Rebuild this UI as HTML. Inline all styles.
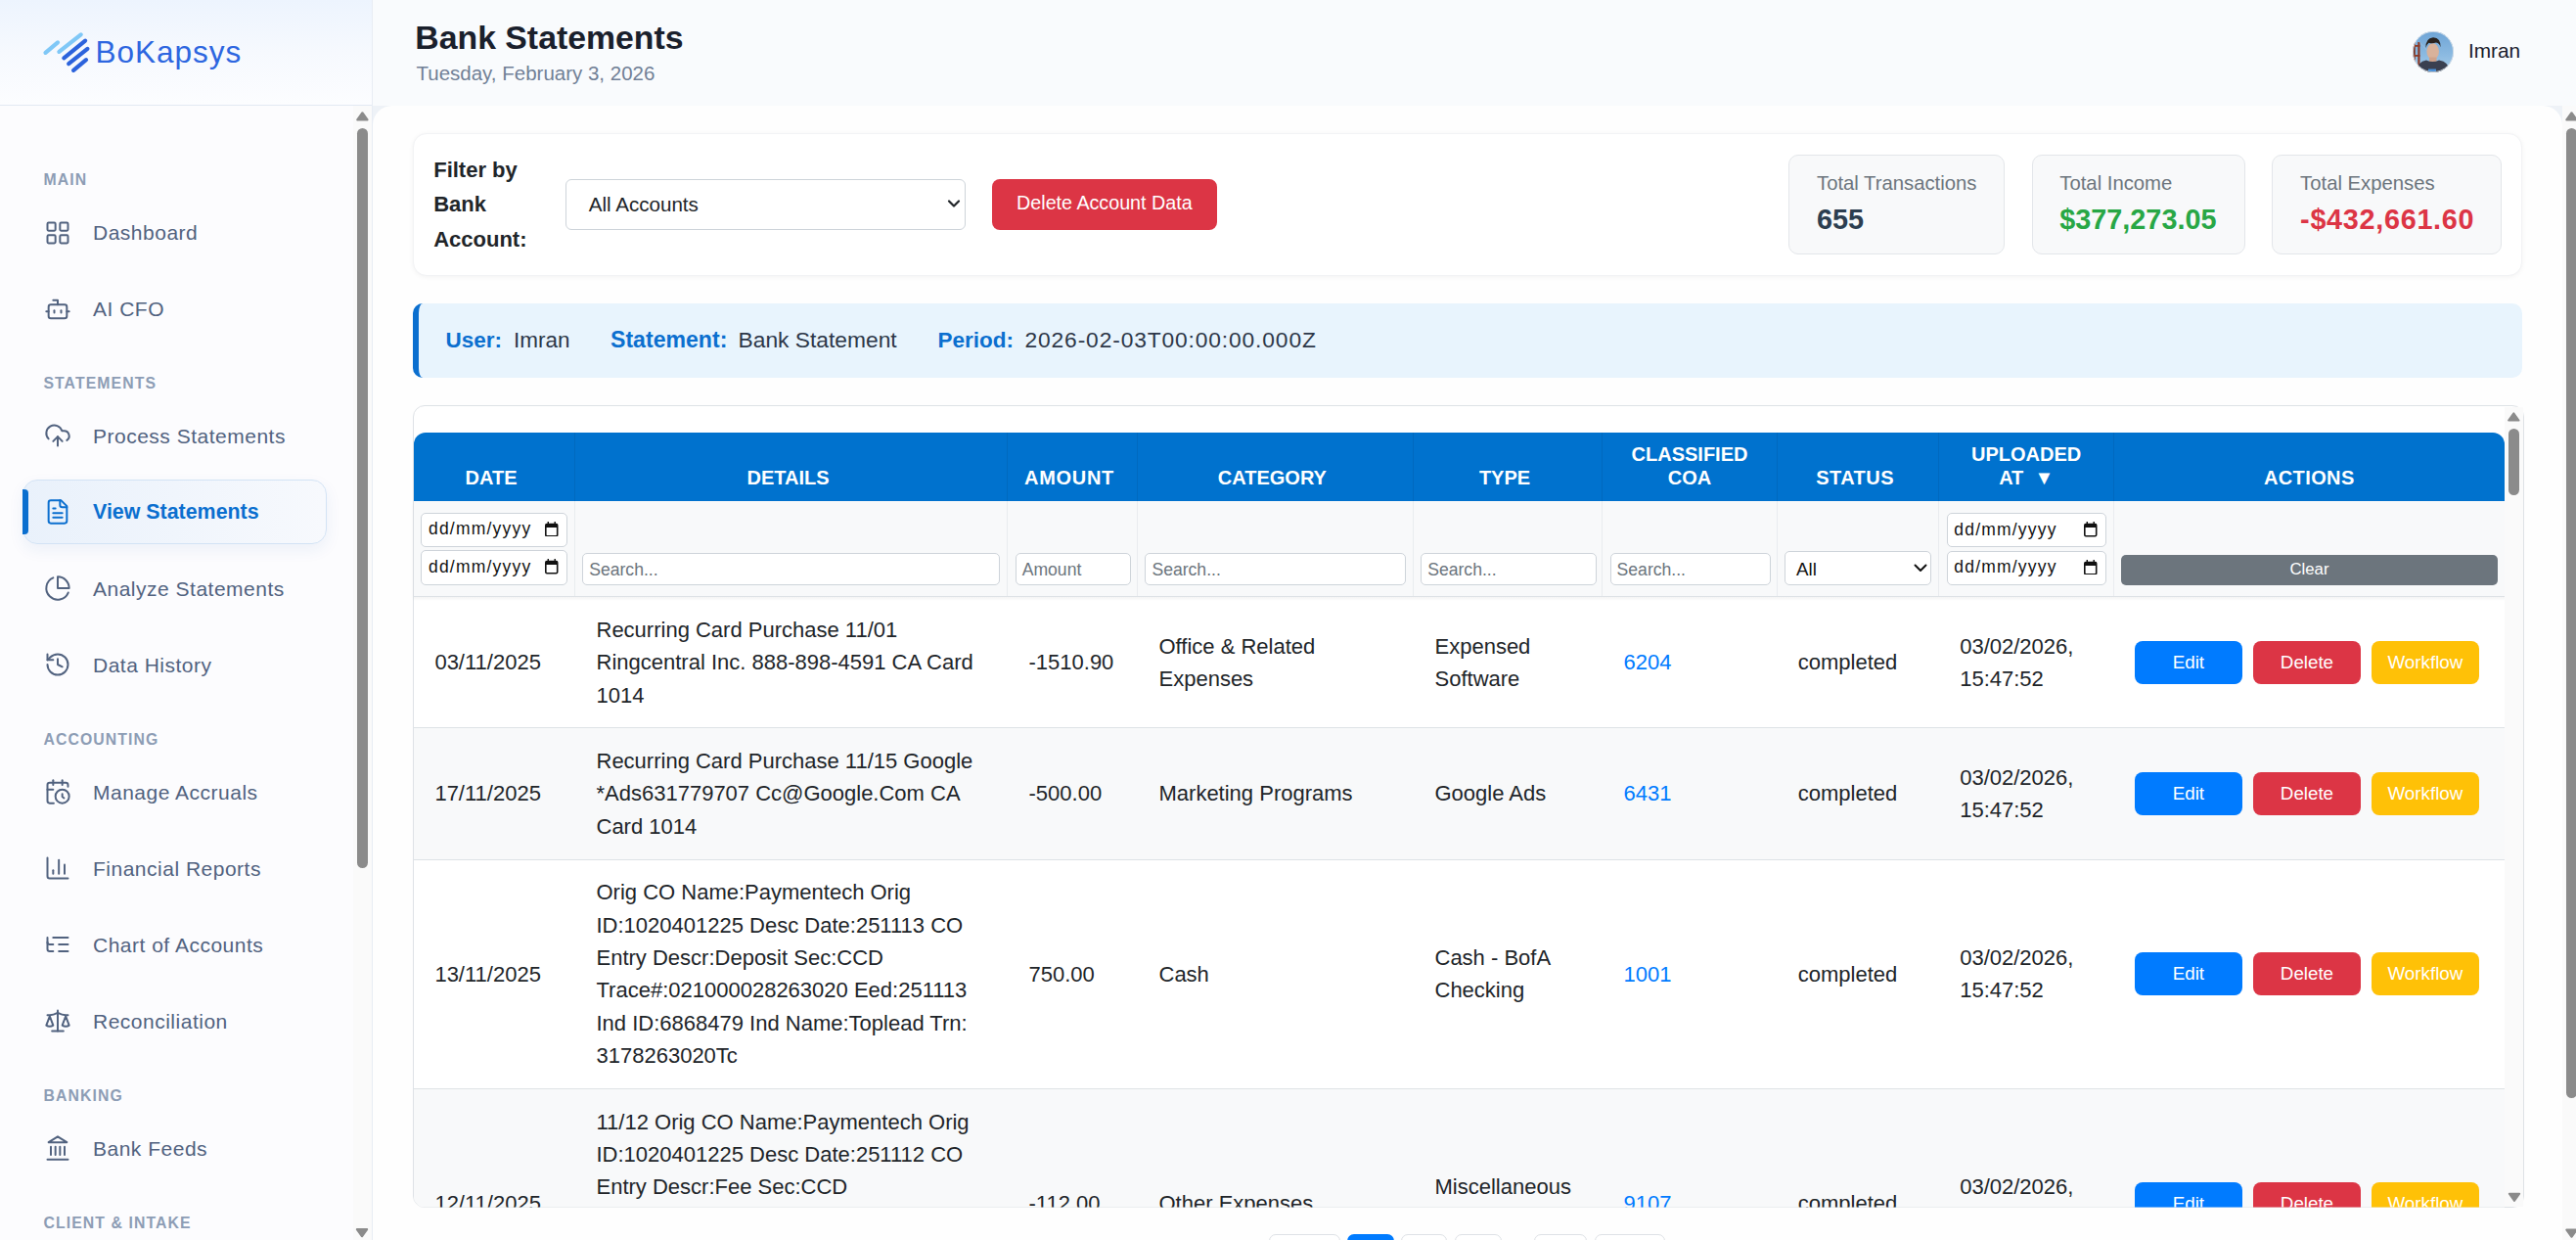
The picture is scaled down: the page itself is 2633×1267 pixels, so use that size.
<!DOCTYPE html><html><head><meta charset="utf-8"><style>
*{box-sizing:border-box;margin:0;padding:0}
html,body{width:2633px;height:1267px;overflow:hidden;font-family:"Liberation Sans",sans-serif;background:#eef2f7}
.t{position:absolute;white-space:nowrap}
.b{position:absolute}
svg.ic{position:absolute;width:28px;height:28px;fill:none;stroke-width:1.7;stroke-linecap:round;stroke-linejoin:round}
.tu{position:absolute;width:0;height:0;border-left:6px solid transparent;border-right:6px solid transparent;border-bottom:9.5px solid #8b8b8b}
.td{position:absolute;width:0;height:0;border-left:6px solid transparent;border-right:6px solid transparent;border-top:9.5px solid #8b8b8b}
.btn{position:absolute;color:#fff;text-align:center;border-radius:8px;font-size:18.75px}
.inp{position:absolute;background:#fff;border:1px solid #ced4da;border-radius:5px}
</style></head><body><div class="b" style="left:381.0px;top:108.0px;width:2238.0px;height:1159.0px;background:#fefefe;border-radius:20px 20px 0 0"></div>
<div class="b" style="left:381.0px;top:0.0px;width:2252.0px;height:108.0px;background:#f9fbfd"></div>
<div class="b" style="left:0.0px;top:0.0px;width:380.0px;height:1267.0px;background:#fcfcfe"></div>
<div class="b" style="left:380.0px;top:0.0px;width:1.0px;height:1267.0px;background:#e8edf4"></div>
<div class="b" style="left:0.0px;top:0.0px;width:380.0px;height:108.0px;background:linear-gradient(180deg,#edf4fe 0%,#f6f9fe 50%,#fcfdff 100%);border-bottom:1px solid #e2e9f3"></div>
<svg style="position:absolute;left:40px;top:30px" width="56" height="48" viewBox="40 30 56 48">
<g stroke-linecap="round" stroke-width="4.2" fill="none">
<line x1="46.5" y1="53.9" x2="59" y2="43.4" stroke="#80c8f7"/>
<line x1="60.4" y1="52.9" x2="82.7" y2="35.4" stroke="#80c8f7"/>
<line x1="65.3" y1="59.3" x2="87.1" y2="41.6" stroke="#2c63dc"/>
<line x1="70.2" y1="65.1" x2="89.4" y2="49.9" stroke="#2c63dc"/>
<line x1="75.1" y1="71.8" x2="88" y2="61.1" stroke="#2c63dc"/>
</g></svg>
<div class="t" style="left:97.5px;top:37.9px;font-size:31.5px;line-height:31.5px;color:#2d66e0;font-weight:400;letter-spacing:1.0px;">BoKapsys</div>
<div class="b" style="left:23.2px;top:490.2px;width:310.8px;height:66.3px;background:linear-gradient(90deg,#e9f1fb 0%,#f0f5fc 50%,#f7f9fd 100%);border:1px solid #d3e3f5;border-radius:15px;box-shadow:0 6px 16px rgba(30,90,170,0.07)"></div>
<div class="b" style="left:23.2px;top:500.1px;width:6.0px;height:45.8px;background:#0b6fcf;border-radius:0 4px 4px 0"></div>
<div class="t" style="left:44.4px;top:176.4px;font-size:15.8px;line-height:15.8px;color:#8d9db5;font-weight:700;letter-spacing:1.1px;">MAIN</div>
<div class="t" style="left:95.0px;top:227.0px;font-size:21px;line-height:21px;color:#51627f;font-weight:400;letter-spacing:0.5px;">Dashboard</div>
<svg class="ic" viewBox="0 0 24 24" style="left:44.6px;top:223.5px;stroke:#51627f"><rect x="3" y="3" width="7" height="7" rx="1"/><rect x="14" y="3" width="7" height="7" rx="1"/><rect x="14" y="14" width="7" height="7" rx="1"/><rect x="3" y="14" width="7" height="7" rx="1"/></svg>
<div class="t" style="left:95.0px;top:305.0px;font-size:21px;line-height:21px;color:#51627f;font-weight:400;letter-spacing:0.5px;">AI CFO</div>
<svg class="ic" viewBox="0 0 24 24" style="left:44.6px;top:301.5px;stroke:#51627f"><path d="M12 8V4H8"/><rect width="16" height="12" x="4" y="8" rx="2"/><path d="M2 14h2"/><path d="M20 14h2"/><path d="M15 13v2"/><path d="M9 13v2"/></svg>
<div class="t" style="left:44.4px;top:384.3px;font-size:15.8px;line-height:15.8px;color:#8d9db5;font-weight:700;letter-spacing:1.1px;">STATEMENTS</div>
<div class="t" style="left:95.0px;top:434.9px;font-size:21px;line-height:21px;color:#51627f;font-weight:400;letter-spacing:0.5px;">Process Statements</div>
<svg class="ic" viewBox="0 0 24 24" style="left:44.6px;top:431.4px;stroke:#51627f"><path d="M12 13v8"/><path d="M4 14.899A7 7 0 1 1 15.71 8h1.79a4.5 4.5 0 0 1 2.5 8.242"/><path d="m8 17 4-4 4 4"/></svg>
<div class="t" style="left:95.0px;top:512.6px;font-size:21.4px;line-height:21.4px;color:#0b6fcf;font-weight:700;letter-spacing:0px;">View Statements</div>
<svg class="ic" viewBox="0 0 24 24" style="left:44.6px;top:509.4px;stroke:#0b6fcf"><path d="M15 2H6a2 2 0 0 0-2 2v16a2 2 0 0 0 2 2h12a2 2 0 0 0 2-2V7Z"/><path d="M14 2v4a2 2 0 0 0 2 2h4"/><path d="M10 9H8"/><path d="M16 13H8"/><path d="M16 17H8"/></svg>
<div class="t" style="left:95.0px;top:590.9px;font-size:21px;line-height:21px;color:#51627f;font-weight:400;letter-spacing:0.5px;">Analyze Statements</div>
<svg class="ic" viewBox="0 0 24 24" style="left:44.6px;top:587.4px;stroke:#51627f"><path d="M21.21 15.89A10 10 0 1 1 8 2.83"/><path d="M22 12A10 10 0 0 0 12 2v10z"/></svg>
<div class="t" style="left:95.0px;top:668.9px;font-size:21px;line-height:21px;color:#51627f;font-weight:400;letter-spacing:0.5px;">Data History</div>
<svg class="ic" viewBox="0 0 24 24" style="left:44.6px;top:665.4px;stroke:#51627f"><path d="M3 12a9 9 0 1 0 9-9 9.75 9.75 0 0 0-6.74 2.74L3 8"/><path d="M3 3v5h5"/><path d="M12 7v5l4 2"/></svg>
<div class="t" style="left:44.4px;top:748.2px;font-size:15.8px;line-height:15.8px;color:#8d9db5;font-weight:700;letter-spacing:1.1px;">ACCOUNTING</div>
<div class="t" style="left:95.0px;top:798.8px;font-size:21px;line-height:21px;color:#51627f;font-weight:400;letter-spacing:0.5px;">Manage Accruals</div>
<svg class="ic" viewBox="0 0 24 24" style="left:44.6px;top:795.3px;stroke:#51627f"><path d="M21 7.5V6a2 2 0 0 0-2-2H5a2 2 0 0 0-2 2v14a2 2 0 0 0 2 2h3.5"/><path d="M16 2v4"/><path d="M8 2v4"/><path d="M3 10h5"/><path d="M17.5 17.5 16 16.3V14"/><circle cx="16" cy="16" r="6"/></svg>
<div class="t" style="left:95.0px;top:876.8px;font-size:21px;line-height:21px;color:#51627f;font-weight:400;letter-spacing:0.5px;">Financial Reports</div>
<svg class="ic" viewBox="0 0 24 24" style="left:44.6px;top:873.3px;stroke:#51627f"><path d="M3 3v16a2 2 0 0 0 2 2h16"/><path d="M18 17V9"/><path d="M13 17V5"/><path d="M8 17v-3"/></svg>
<div class="t" style="left:95.0px;top:954.8px;font-size:21px;line-height:21px;color:#51627f;font-weight:400;letter-spacing:0.5px;">Chart of Accounts</div>
<svg class="ic" viewBox="0 0 24 24" style="left:44.6px;top:951.3px;stroke:#51627f"><path d="M21 12h-8"/><path d="M21 6H8"/><path d="M21 18h-8"/><path d="M3 6v4c0 1.1.9 2 2 2h3"/><path d="M3 10v6c0 1.1.9 2 2 2h3"/></svg>
<div class="t" style="left:95.0px;top:1032.8px;font-size:21px;line-height:21px;color:#51627f;font-weight:400;letter-spacing:0.5px;">Reconciliation</div>
<svg class="ic" viewBox="0 0 24 24" style="left:44.6px;top:1029.3px;stroke:#51627f"><path d="m16 16 3-8 3 8c-.87.65-1.92 1-3 1s-2.13-.35-3-1Z"/><path d="m2 16 3-8 3 8c-.87.65-1.92 1-3 1s-2.13-.35-3-1Z"/><path d="M7 21h10"/><path d="M12 3v18"/><path d="M3 7h2c2 0 5-1 7-2 2 1 5 2 7 2h2"/></svg>
<div class="t" style="left:44.4px;top:1112.1px;font-size:15.8px;line-height:15.8px;color:#8d9db5;font-weight:700;letter-spacing:1.1px;">BANKING</div>
<div class="t" style="left:95.0px;top:1162.7px;font-size:21px;line-height:21px;color:#51627f;font-weight:400;letter-spacing:0.5px;">Bank Feeds</div>
<svg class="ic" viewBox="0 0 24 24" style="left:44.6px;top:1159.2px;stroke:#51627f"><line x1="3" x2="21" y1="22" y2="22"/><line x1="6" x2="6" y1="18" y2="11"/><line x1="10" x2="10" y1="18" y2="11"/><line x1="14" x2="14" y1="18" y2="11"/><line x1="18" x2="18" y1="18" y2="11"/><polygon points="12 2 20 7 4 7"/></svg>
<div class="t" style="left:44.4px;top:1242.0px;font-size:15.8px;line-height:15.8px;color:#8d9db5;font-weight:700;letter-spacing:1.1px;">CLIENT &amp; INTAKE</div>
<div class="b" style="left:361.0px;top:108.0px;width:19.0px;height:1159.0px;background:#fafafa"></div>
<svg style="position:absolute;left:0;top:0;overflow:visible" width="1" height="1"><polygon points="370.4,115.2 375.59999999999997,122.4 365.2,122.4" fill="#8b8b8b" stroke="#8b8b8b" stroke-width="2" stroke-linejoin="round"/></svg>
<div class="b" style="left:365.0px;top:130.8px;width:11.0px;height:755.9px;background:#8b8b8b;border-radius:6px"></div>
<svg style="position:absolute;left:0;top:0;overflow:visible" width="1" height="1"><polygon points="364.8,1256.1 375.2,1256.1 370,1263.3" fill="#8b8b8b" stroke="#8b8b8b" stroke-width="2" stroke-linejoin="round"/></svg>
<div class="t" style="left:424.3px;top:21.9px;font-size:33.8px;line-height:33.8px;color:#1a202c;font-weight:700;letter-spacing:0px;">Bank Statements</div>
<div class="t" style="left:425.5px;top:64.6px;font-size:20.5px;line-height:20.5px;color:#718096;font-weight:400;letter-spacing:0px;">Tuesday, February 3, 2026</div>
<svg style="position:absolute;left:2466px;top:32px" width="42" height="42" viewBox="0 0 42 42">
<defs><clipPath id="cav"><circle cx="21" cy="21" r="21"/></clipPath>
<linearGradient id="sky" x1="0" y1="0" x2="0" y2="1"><stop offset="0" stop-color="#6ea4d6"/><stop offset="0.6" stop-color="#8dbbe2"/><stop offset="1" stop-color="#a9cde8"/></linearGradient></defs>
<g clip-path="url(#cav)">
<rect width="42" height="42" fill="url(#sky)"/>
<rect x="0.5" y="10" width="2.2" height="32" fill="#7a3322"/>
<rect x="5.3" y="11" width="2.2" height="31" fill="#8c3b28"/>
<rect x="0.5" y="14" width="7" height="1.8" fill="#8c3b28"/>
<rect x="0.5" y="24" width="7" height="1.8" fill="#8c3b28"/>
<path d="M7 11 L30 36" stroke="#b9cfe0" stroke-width="0.4"/>
<ellipse cx="20.7" cy="20.5" rx="6.3" ry="8.3" fill="#d9b29b"/>
<path d="M13.5 17 Q13 7 21 6.2 Q29 6.5 28.6 16.5 Q27.5 12 24 11.6 Q20 13 16.5 11.8 Q14.5 13 13.5 17Z" fill="#2a2320"/>
<rect x="17" y="26.5" width="7.5" height="5" fill="#cfa38c"/>
<path d="M3 42 Q5 31 14 29.5 Q20.5 32.5 27 29.5 Q37 31 39 42Z" fill="#3a4050"/>
<rect x="16" y="38.5" width="8" height="2.5" fill="#4a90d8"/>
</g><circle cx="21" cy="21" r="20.6" fill="none" stroke="#dfe3e8" stroke-width="0.8"/></svg>
<div class="t" style="left:2523.0px;top:42.2px;font-size:20.8px;line-height:20.8px;color:#1a202c;font-weight:400;letter-spacing:0px;">Imran</div>
<div class="b" style="left:2619.0px;top:108.0px;width:14.0px;height:1159.0px;background:#fafafa"></div>
<svg style="position:absolute;left:0;top:0;overflow:visible" width="1" height="1"><polygon points="2628.5,115.2 2633.7,122.4 2623.3,122.4" fill="#8b8b8b" stroke="#8b8b8b" stroke-width="2" stroke-linejoin="round"/></svg>
<div class="b" style="left:2623.0px;top:130.5px;width:11.0px;height:991.1px;background:#8b8b8b;border-radius:6px"></div>
<svg style="position:absolute;left:0;top:0;overflow:visible" width="1" height="1"><polygon points="2623.3,1256.6 2633.7,1256.6 2628.5,1263.8" fill="#8b8b8b" stroke="#8b8b8b" stroke-width="2" stroke-linejoin="round"/></svg>
<div class="b" style="left:421.7px;top:135.7px;width:2156.1px;height:146.1px;background:#fff;border:1px solid #f2f3f5;border-radius:14px;box-shadow:0 1px 5px rgba(0,0,0,0.05)"></div>
<div class="t" style="left:443.2px;top:162.6px;font-size:22px;line-height:22px;color:#212529;font-weight:700;letter-spacing:0px;">Filter by</div>
<div class="t" style="left:443.2px;top:198.2px;font-size:22px;line-height:22px;color:#212529;font-weight:700;letter-spacing:0px;">Bank</div>
<div class="t" style="left:443.2px;top:233.8px;font-size:22px;line-height:22px;color:#212529;font-weight:700;letter-spacing:0px;">Account:</div>
<div class="b" style="left:578.1px;top:183.2px;width:408.9px;height:51.6px;background:#fff;border:1px solid #ced4da;border-radius:6px"></div>
<div class="t" style="left:601.7px;top:199.1px;font-size:20.6px;line-height:20.6px;color:#212529;font-weight:400;letter-spacing:0px;">All Accounts</div>
<svg style="position:absolute;left:968px;top:203px" width="14" height="10" viewBox="0 0 14 10"><path d="M2 2.5 7 7.5 12 2.5" fill="none" stroke="#212529" stroke-width="2.2" stroke-linecap="round" stroke-linejoin="round"/></svg>
<div class="b" style="left:1013.9px;top:183.2px;width:229.9px;height:51.4px;background:#dc3545;border-radius:8px"></div>
<div class="t" style="left:1013.9px;width:229.9px;text-align:center;top:198.2px;font-size:19.7px;line-height:19.7px;color:#fff">Delete Account Data</div>
<div class="b" style="left:1828.2px;top:158.2px;width:220.6px;height:101.6px;background:#f8f9fa;border:1px solid #e3e6ea;border-radius:10px"></div>
<div class="t" style="left:1857.0px;top:177.0px;font-size:20.3px;line-height:20.3px;color:#6c757d;font-weight:400;letter-spacing:0px;">Total Transactions</div>
<div class="t" style="left:1857.0px;top:209.5px;font-size:28.8px;line-height:28.8px;color:#2c3e50;font-weight:700;letter-spacing:0px;">655</div>
<div class="b" style="left:2076.5px;top:158.2px;width:218.3px;height:101.6px;background:#f8f9fa;border:1px solid #e3e6ea;border-radius:10px"></div>
<div class="t" style="left:2105.3px;top:177.0px;font-size:20.3px;line-height:20.3px;color:#6c757d;font-weight:400;letter-spacing:0px;">Total Income</div>
<div class="t" style="left:2105.3px;top:209.5px;font-size:28.8px;line-height:28.8px;color:#28a745;font-weight:700;letter-spacing:0px;">$377,273.05</div>
<div class="b" style="left:2322.3px;top:158.2px;width:234.5px;height:101.6px;background:#f8f9fa;border:1px solid #e3e6ea;border-radius:10px"></div>
<div class="t" style="left:2351.1px;top:177.0px;font-size:20.3px;line-height:20.3px;color:#6c757d;font-weight:400;letter-spacing:0px;">Total Expenses</div>
<div class="t" style="left:2351.1px;top:209.5px;font-size:28.8px;line-height:28.8px;color:#dc3545;font-weight:700;letter-spacing:0.7px;">-$432,661.60</div>
<div class="b" style="left:422.0px;top:309.9px;width:2156.0px;height:75.9px;background:#e8f4fd;border-radius:10px;overflow:hidden"></div>
<div class="b" style="left:422.0px;top:309.9px;width:18.0px;height:75.9px;border-left:6px solid #0b6fcf;border-radius:10px 0 0 10px"></div>
<div class="t" style="left:455.5px;top:336.6px;font-size:22.5px;line-height:22.5px;color:#0b6fcf;font-weight:700;letter-spacing:0px;">User:</div>
<div class="t" style="left:525.0px;top:336.6px;font-size:22.5px;line-height:22.5px;color:#2d3748;font-weight:400;letter-spacing:0px;">Imran</div>
<div class="t" style="left:624.0px;top:336.0px;font-size:23.1px;line-height:23.1px;color:#0b6fcf;font-weight:700;letter-spacing:0px;">Statement:</div>
<div class="t" style="left:754.5px;top:336.3px;font-size:22.8px;line-height:22.8px;color:#2d3748;font-weight:400;letter-spacing:0px;">Bank Statement</div>
<div class="t" style="left:958.5px;top:336.6px;font-size:22.5px;line-height:22.5px;color:#0b6fcf;font-weight:700;letter-spacing:0px;">Period:</div>
<div class="t" style="left:1047.5px;top:336.3px;font-size:22.8px;line-height:22.8px;color:#2d3748;font-weight:400;letter-spacing:0.86px;">2026-02-03T00:00:00.000Z</div>
<div class="b" style="left:422.0px;top:414.0px;width:2158.0px;height:820.0px;background:#fff;border:1px solid #dee2e6;border-radius:12px"></div>
<div class="b" style="left:423.0px;top:442.0px;width:2137.0px;height:70.0px;background:#0072ce;border-radius:12px 12px 0 0"></div>
<div class="b" style="left:586.5px;top:442.0px;width:1.0px;height:70.0px;background:rgba(0,0,0,0.07)"></div>
<div class="b" style="left:1028.5px;top:442.0px;width:1.0px;height:70.0px;background:rgba(0,0,0,0.07)"></div>
<div class="b" style="left:1161.5px;top:442.0px;width:1.0px;height:70.0px;background:rgba(0,0,0,0.07)"></div>
<div class="b" style="left:1443.5px;top:442.0px;width:1.0px;height:70.0px;background:rgba(0,0,0,0.07)"></div>
<div class="b" style="left:1637.0px;top:442.0px;width:1.0px;height:70.0px;background:rgba(0,0,0,0.07)"></div>
<div class="b" style="left:1816.0px;top:442.0px;width:1.0px;height:70.0px;background:rgba(0,0,0,0.07)"></div>
<div class="b" style="left:1980.8px;top:442.0px;width:1.0px;height:70.0px;background:rgba(0,0,0,0.07)"></div>
<div class="b" style="left:2159.7px;top:442.0px;width:1.0px;height:70.0px;background:rgba(0,0,0,0.07)"></div>
<div class="b" style="left:423.0px;top:512.0px;width:2137.0px;height:97.5px;background:#f8f9fa;border-bottom:1px solid #dee2e6;box-shadow:0 2px 4px rgba(0,0,0,0.05)"></div>
<div class="b" style="left:586.5px;top:512.0px;width:1.0px;height:97.0px;background:#e9ecef"></div>
<div class="b" style="left:1028.5px;top:512.0px;width:1.0px;height:97.0px;background:#e9ecef"></div>
<div class="b" style="left:1161.5px;top:512.0px;width:1.0px;height:97.0px;background:#e9ecef"></div>
<div class="b" style="left:1443.5px;top:512.0px;width:1.0px;height:97.0px;background:#e9ecef"></div>
<div class="b" style="left:1637.0px;top:512.0px;width:1.0px;height:97.0px;background:#e9ecef"></div>
<div class="b" style="left:1816.0px;top:512.0px;width:1.0px;height:97.0px;background:#e9ecef"></div>
<div class="b" style="left:1980.8px;top:512.0px;width:1.0px;height:97.0px;background:#e9ecef"></div>
<div class="b" style="left:2159.7px;top:512.0px;width:1.0px;height:97.0px;background:#e9ecef"></div>
<div class="t" style="left:352.0px;width:300px;text-align:center;top:478.3px;font-size:20px;line-height:20px;color:#fff;font-weight:700;letter-spacing:0px;text-indent:0px">DATE</div>
<div class="t" style="left:655.5px;width:300px;text-align:center;top:478.3px;font-size:20px;line-height:20px;color:#fff;font-weight:700;letter-spacing:0px;text-indent:0px">DETAILS</div>
<div class="t" style="left:942.7px;width:300px;text-align:center;top:478.3px;font-size:20px;line-height:20px;color:#fff;font-weight:700;letter-spacing:0.7px;text-indent:0.7px">AMOUNT</div>
<div class="t" style="left:1150.4px;width:300px;text-align:center;top:478.3px;font-size:20px;line-height:20px;color:#fff;font-weight:700;letter-spacing:0px;text-indent:0px">CATEGORY</div>
<div class="t" style="left:1388.0px;width:300px;text-align:center;top:478.3px;font-size:20px;line-height:20px;color:#fff;font-weight:700;letter-spacing:0px;text-indent:0px">TYPE</div>
<div class="t" style="left:1577.0px;width:300px;text-align:center;top:453.9px;font-size:20px;line-height:20px;color:#fff;font-weight:700;letter-spacing:0px;text-indent:0px">CLASSIFIED</div>
<div class="t" style="left:1577.0px;width:300px;text-align:center;top:478.3px;font-size:20px;line-height:20px;color:#fff;font-weight:700;letter-spacing:0px;text-indent:0px">COA</div>
<div class="t" style="left:1745.9px;width:300px;text-align:center;top:478.3px;font-size:20px;line-height:20px;color:#fff;font-weight:700;letter-spacing:0.45px;text-indent:0.45px">STATUS</div>
<div class="t" style="left:1921.2px;width:300px;text-align:center;top:453.9px;font-size:20px;line-height:20px;color:#fff;font-weight:700;letter-spacing:0px;text-indent:0px">UPLOADED</div>
<div class="t" style="left:1921.2px;width:300px;text-align:center;top:478.3px;font-size:20px;line-height:20px;color:#fff;font-weight:700;letter-spacing:0px;text-indent:0px">AT &nbsp;&#9660;</div>
<div class="t" style="left:2210.1px;width:300px;text-align:center;top:478.3px;font-size:20px;line-height:20px;color:#fff;font-weight:700;letter-spacing:0.4px;text-indent:0.4px">ACTIONS</div>
<div class="b" style="left:430.2px;top:524.1px;width:150.2px;height:35.3px;background:#fff;border:1px solid #ced4da;border-radius:5px"></div>
<div class="t" style="left:438.0px;top:532.3px;font-size:17.5px;line-height:17.5px;color:#111;font-weight:400;letter-spacing:1.2px;">dd/mm/yyyy</div>
<svg style="position:absolute;left:557.1px;top:532.9px" width="13.5" height="15.5" viewBox="0 0 13.5 15.5"><rect x="0.8" y="2.6" width="11.9" height="12.1" rx="1.2" fill="none" stroke="#111" stroke-width="1.6"/><rect x="0.8" y="2.6" width="11.9" height="3.4" fill="#111"/><rect x="2.6" y="0" width="1.4" height="3" fill="#111"/><rect x="9.5" y="0" width="1.4" height="3" fill="#111"/></svg>
<div class="b" style="left:430.2px;top:562.3px;width:150.2px;height:35.3px;background:#fff;border:1px solid #ced4da;border-radius:5px"></div>
<div class="t" style="left:438.0px;top:571.0px;font-size:17.5px;line-height:17.5px;color:#111;font-weight:400;letter-spacing:1.2px;">dd/mm/yyyy</div>
<svg style="position:absolute;left:557.1px;top:571.1px" width="13.5" height="15.5" viewBox="0 0 13.5 15.5"><rect x="0.8" y="2.6" width="11.9" height="12.1" rx="1.2" fill="none" stroke="#111" stroke-width="1.6"/><rect x="0.8" y="2.6" width="11.9" height="3.4" fill="#111"/><rect x="2.6" y="0" width="1.4" height="3" fill="#111"/><rect x="9.5" y="0" width="1.4" height="3" fill="#111"/></svg>
<div class="b" style="left:1989.5px;top:524.3px;width:163.9px;height:35.1px;background:#fff;border:1px solid #ced4da;border-radius:5px"></div>
<div class="t" style="left:1997.3px;top:532.5px;font-size:17.5px;line-height:17.5px;color:#111;font-weight:400;letter-spacing:1.2px;">dd/mm/yyyy</div>
<svg style="position:absolute;left:2130.1px;top:533.1px" width="13.5" height="15.5" viewBox="0 0 13.5 15.5"><rect x="0.8" y="2.6" width="11.9" height="12.1" rx="1.2" fill="none" stroke="#111" stroke-width="1.6"/><rect x="0.8" y="2.6" width="11.9" height="3.4" fill="#111"/><rect x="2.6" y="0" width="1.4" height="3" fill="#111"/><rect x="9.5" y="0" width="1.4" height="3" fill="#111"/></svg>
<div class="b" style="left:1989.5px;top:562.7px;width:163.9px;height:35.1px;background:#fff;border:1px solid #ced4da;border-radius:5px"></div>
<div class="t" style="left:1997.3px;top:571.4px;font-size:17.5px;line-height:17.5px;color:#111;font-weight:400;letter-spacing:1.2px;">dd/mm/yyyy</div>
<svg style="position:absolute;left:2130.1px;top:571.5px" width="13.5" height="15.5" viewBox="0 0 13.5 15.5"><rect x="0.8" y="2.6" width="11.9" height="12.1" rx="1.2" fill="none" stroke="#111" stroke-width="1.6"/><rect x="0.8" y="2.6" width="11.9" height="3.4" fill="#111"/><rect x="2.6" y="0" width="1.4" height="3" fill="#111"/><rect x="9.5" y="0" width="1.4" height="3" fill="#111"/></svg>
<div class="b" style="left:595.2px;top:565.3px;width:427.3px;height:32.5px;background:#fff;border:1px solid #ced4da;border-radius:5px"></div>
<div class="t" style="left:602.2px;top:573.9px;font-size:17.6px;line-height:17.6px;color:#6c757d;font-weight:400;letter-spacing:0px;">Search...</div>
<div class="b" style="left:1037.7px;top:565.3px;width:118.6px;height:32.5px;background:#fff;border:1px solid #ced4da;border-radius:5px"></div>
<div class="t" style="left:1044.7px;top:573.9px;font-size:17.6px;line-height:17.6px;color:#6c757d;font-weight:400;letter-spacing:0px;">Amount</div>
<div class="b" style="left:1170.4px;top:565.3px;width:267.0px;height:32.5px;background:#fff;border:1px solid #ced4da;border-radius:5px"></div>
<div class="t" style="left:1177.4px;top:573.9px;font-size:17.6px;line-height:17.6px;color:#6c757d;font-weight:400;letter-spacing:0px;">Search...</div>
<div class="b" style="left:1452.2px;top:565.3px;width:179.4px;height:32.5px;background:#fff;border:1px solid #ced4da;border-radius:5px"></div>
<div class="t" style="left:1459.2px;top:573.9px;font-size:17.6px;line-height:17.6px;color:#6c757d;font-weight:400;letter-spacing:0px;">Search...</div>
<div class="b" style="left:1645.6px;top:565.3px;width:164.0px;height:32.5px;background:#fff;border:1px solid #ced4da;border-radius:5px"></div>
<div class="t" style="left:1652.6px;top:573.9px;font-size:17.6px;line-height:17.6px;color:#6c757d;font-weight:400;letter-spacing:0px;">Search...</div>
<div class="b" style="left:1824.2px;top:563.2px;width:150.1px;height:34.6px;background:#fff;border:1px solid #ced4da;border-radius:5px"></div>
<div class="t" style="left:1836.0px;top:573.4px;font-size:18.75px;line-height:18.75px;color:#111;font-weight:400;letter-spacing:0px;">All</div>
<svg style="position:absolute;left:1956px;top:576px" width="14" height="9" viewBox="0 0 14 9"><path d="M1.5 1.5 7 7 12.5 1.5" fill="none" stroke="#111" stroke-width="2" stroke-linecap="round" stroke-linejoin="round"/></svg>
<div class="b" style="left:2168.1px;top:567.4px;width:384.8px;height:30.4px;background:#6c757d;border-radius:5px"></div>
<div class="t" style="left:2168px;width:385px;text-align:center;top:574.2px;font-size:16.75px;line-height:16.75px;color:#fff">Clear</div>
<div style="position:absolute;left:0;top:0;width:2633px;height:1267px;clip-path:inset(609.5px 73px 33.5px 423px round 0 0 0 11px)">
<div class="b" style="left:423.0px;top:609.5px;width:2137.0px;height:133.5px;background:#fff"></div>
<div class="b" style="left:423.0px;top:743.0px;width:2137.0px;height:135.0px;background:#f8f9fa;border-top:1px solid #dee2e6"></div>
<div class="b" style="left:423.0px;top:878.0px;width:2137.0px;height:234.0px;background:#fff;border-top:1px solid #dee2e6"></div>
<div class="b" style="left:423.0px;top:1112.0px;width:2137.0px;height:121.5px;background:#f8f9fa;border-top:1px solid #dee2e6"></div>
<div class="t" style="left:444.4px;top:666.2px;font-size:22px;line-height:22px;color:#212529;font-weight:400;letter-spacing:0px;">03/11/2025</div>
<div class="t" style="left:609.5px;top:632.9px;font-size:22px;line-height:22px;color:#212529;font-weight:400;letter-spacing:0px;">Recurring Card Purchase 11/01</div>
<div class="t" style="left:609.5px;top:666.2px;font-size:22px;line-height:22px;color:#212529;font-weight:400;letter-spacing:0px;">Ringcentral Inc. 888-898-4591 CA Card</div>
<div class="t" style="left:609.5px;top:699.5px;font-size:22px;line-height:22px;color:#212529;font-weight:400;letter-spacing:0px;">1014</div>
<div class="t" style="left:1051.5px;top:666.2px;font-size:22px;line-height:22px;color:#212529;font-weight:400;letter-spacing:0px;">-1510.90</div>
<div class="t" style="left:1184.5px;top:649.5px;font-size:22px;line-height:22px;color:#212529;font-weight:400;letter-spacing:0px;">Office &amp; Related</div>
<div class="t" style="left:1184.5px;top:682.8px;font-size:22px;line-height:22px;color:#212529;font-weight:400;letter-spacing:0px;">Expenses</div>
<div class="t" style="left:1466.5px;top:649.5px;font-size:22px;line-height:22px;color:#212529;font-weight:400;letter-spacing:0px;">Expensed</div>
<div class="t" style="left:1466.5px;top:682.8px;font-size:22px;line-height:22px;color:#212529;font-weight:400;letter-spacing:0px;">Software</div>
<div class="t" style="left:1659.5px;top:666.2px;font-size:22px;line-height:22px;color:#007bff;font-weight:400;letter-spacing:0px;">6204</div>
<div class="t" style="left:1837.8px;top:666.2px;font-size:22px;line-height:22px;color:#212529;font-weight:400;letter-spacing:0px;">completed</div>
<div class="t" style="left:2003.2px;top:649.5px;font-size:22px;line-height:22px;color:#212529;font-weight:400;letter-spacing:0px;">03/02/2026,</div>
<div class="t" style="left:2003.2px;top:682.8px;font-size:22px;line-height:22px;color:#212529;font-weight:400;letter-spacing:0px;">15:47:52</div>
<div class="b" style="left:2182.0px;top:654.8px;width:109.8px;height:43.8px;background:#007bff;border-radius:8px"></div>
<div class="t" style="left:2182.0px;width:109.8px;text-align:center;top:667.7px;font-size:18.75px;line-height:18.75px;color:#fff">Edit</div>
<div class="b" style="left:2303.0px;top:654.8px;width:109.9px;height:43.8px;background:#dc3545;border-radius:8px"></div>
<div class="t" style="left:2303.0px;width:109.9px;text-align:center;top:667.7px;font-size:18.75px;line-height:18.75px;color:#fff">Delete</div>
<div class="b" style="left:2424.0px;top:654.8px;width:109.8px;height:43.8px;background:#ffc107;border-radius:8px"></div>
<div class="t" style="left:2424.0px;width:109.8px;text-align:center;top:667.7px;font-size:18.75px;line-height:18.75px;color:#fff">Workflow</div>
<div class="t" style="left:444.4px;top:800.4px;font-size:22px;line-height:22px;color:#212529;font-weight:400;letter-spacing:0px;">17/11/2025</div>
<div class="t" style="left:609.5px;top:767.1px;font-size:22px;line-height:22px;color:#212529;font-weight:400;letter-spacing:0px;">Recurring Card Purchase 11/15 Google</div>
<div class="t" style="left:609.5px;top:800.4px;font-size:22px;line-height:22px;color:#212529;font-weight:400;letter-spacing:0px;">*Ads631779707 Cc@Google.Com CA</div>
<div class="t" style="left:609.5px;top:833.7px;font-size:22px;line-height:22px;color:#212529;font-weight:400;letter-spacing:0px;">Card 1014</div>
<div class="t" style="left:1051.5px;top:800.4px;font-size:22px;line-height:22px;color:#212529;font-weight:400;letter-spacing:0px;">-500.00</div>
<div class="t" style="left:1184.5px;top:800.4px;font-size:22px;line-height:22px;color:#212529;font-weight:400;letter-spacing:0px;">Marketing Programs</div>
<div class="t" style="left:1466.5px;top:800.4px;font-size:22px;line-height:22px;color:#212529;font-weight:400;letter-spacing:0px;">Google Ads</div>
<div class="t" style="left:1659.5px;top:800.4px;font-size:22px;line-height:22px;color:#007bff;font-weight:400;letter-spacing:0px;">6431</div>
<div class="t" style="left:1837.8px;top:800.4px;font-size:22px;line-height:22px;color:#212529;font-weight:400;letter-spacing:0px;">completed</div>
<div class="t" style="left:2003.2px;top:783.7px;font-size:22px;line-height:22px;color:#212529;font-weight:400;letter-spacing:0px;">03/02/2026,</div>
<div class="t" style="left:2003.2px;top:817.0px;font-size:22px;line-height:22px;color:#212529;font-weight:400;letter-spacing:0px;">15:47:52</div>
<div class="b" style="left:2182.0px;top:789.0px;width:109.8px;height:43.8px;background:#007bff;border-radius:8px"></div>
<div class="t" style="left:2182.0px;width:109.8px;text-align:center;top:801.9px;font-size:18.75px;line-height:18.75px;color:#fff">Edit</div>
<div class="b" style="left:2303.0px;top:789.0px;width:109.9px;height:43.8px;background:#dc3545;border-radius:8px"></div>
<div class="t" style="left:2303.0px;width:109.9px;text-align:center;top:801.9px;font-size:18.75px;line-height:18.75px;color:#fff">Delete</div>
<div class="b" style="left:2424.0px;top:789.0px;width:109.8px;height:43.8px;background:#ffc107;border-radius:8px"></div>
<div class="t" style="left:2424.0px;width:109.8px;text-align:center;top:801.9px;font-size:18.75px;line-height:18.75px;color:#fff">Workflow</div>
<div class="t" style="left:444.4px;top:984.7px;font-size:22px;line-height:22px;color:#212529;font-weight:400;letter-spacing:0px;">13/11/2025</div>
<div class="t" style="left:609.5px;top:901.4px;font-size:22px;line-height:22px;color:#212529;font-weight:400;letter-spacing:0px;">Orig CO Name:Paymentech Orig</div>
<div class="t" style="left:609.5px;top:934.7px;font-size:22px;line-height:22px;color:#212529;font-weight:400;letter-spacing:0px;">ID:1020401225 Desc Date:251113 CO</div>
<div class="t" style="left:609.5px;top:968.0px;font-size:22px;line-height:22px;color:#212529;font-weight:400;letter-spacing:0px;">Entry Descr:Deposit Sec:CCD</div>
<div class="t" style="left:609.5px;top:1001.3px;font-size:22px;line-height:22px;color:#212529;font-weight:400;letter-spacing:0px;">Trace#:021000028263020 Eed:251113</div>
<div class="t" style="left:609.5px;top:1034.6px;font-size:22px;line-height:22px;color:#212529;font-weight:400;letter-spacing:0px;">Ind ID:6868479 Ind Name:Toplead Trn:</div>
<div class="t" style="left:609.5px;top:1067.9px;font-size:22px;line-height:22px;color:#212529;font-weight:400;letter-spacing:0px;">3178263020Tc</div>
<div class="t" style="left:1051.5px;top:984.7px;font-size:22px;line-height:22px;color:#212529;font-weight:400;letter-spacing:0px;">750.00</div>
<div class="t" style="left:1184.5px;top:984.7px;font-size:22px;line-height:22px;color:#212529;font-weight:400;letter-spacing:0px;">Cash</div>
<div class="t" style="left:1466.5px;top:968.0px;font-size:22px;line-height:22px;color:#212529;font-weight:400;letter-spacing:0px;">Cash - BofA</div>
<div class="t" style="left:1466.5px;top:1001.3px;font-size:22px;line-height:22px;color:#212529;font-weight:400;letter-spacing:0px;">Checking</div>
<div class="t" style="left:1659.5px;top:984.7px;font-size:22px;line-height:22px;color:#007bff;font-weight:400;letter-spacing:0px;">1001</div>
<div class="t" style="left:1837.8px;top:984.7px;font-size:22px;line-height:22px;color:#212529;font-weight:400;letter-spacing:0px;">completed</div>
<div class="t" style="left:2003.2px;top:968.0px;font-size:22px;line-height:22px;color:#212529;font-weight:400;letter-spacing:0px;">03/02/2026,</div>
<div class="t" style="left:2003.2px;top:1001.3px;font-size:22px;line-height:22px;color:#212529;font-weight:400;letter-spacing:0px;">15:47:52</div>
<div class="b" style="left:2182.0px;top:973.3px;width:109.8px;height:43.8px;background:#007bff;border-radius:8px"></div>
<div class="t" style="left:2182.0px;width:109.8px;text-align:center;top:986.2px;font-size:18.75px;line-height:18.75px;color:#fff">Edit</div>
<div class="b" style="left:2303.0px;top:973.3px;width:109.9px;height:43.8px;background:#dc3545;border-radius:8px"></div>
<div class="t" style="left:2303.0px;width:109.9px;text-align:center;top:986.2px;font-size:18.75px;line-height:18.75px;color:#fff">Delete</div>
<div class="b" style="left:2424.0px;top:973.3px;width:109.8px;height:43.8px;background:#ffc107;border-radius:8px"></div>
<div class="t" style="left:2424.0px;width:109.8px;text-align:center;top:986.2px;font-size:18.75px;line-height:18.75px;color:#fff">Workflow</div>
<div class="t" style="left:444.4px;top:1219.0px;font-size:22px;line-height:22px;color:#212529;font-weight:400;letter-spacing:0px;">12/11/2025</div>
<div class="t" style="left:609.5px;top:1135.7px;font-size:22px;line-height:22px;color:#212529;font-weight:400;letter-spacing:0px;">11/12 Orig CO Name:Paymentech Orig</div>
<div class="t" style="left:609.5px;top:1169.0px;font-size:22px;line-height:22px;color:#212529;font-weight:400;letter-spacing:0px;">ID:1020401225 Desc Date:251112 CO</div>
<div class="t" style="left:609.5px;top:1202.3px;font-size:22px;line-height:22px;color:#212529;font-weight:400;letter-spacing:0px;">Entry Descr:Fee Sec:CCD</div>
<div class="t" style="left:609.5px;top:1235.6px;font-size:22px;line-height:22px;color:#212529;font-weight:400;letter-spacing:0px;">Trace#:021000028263020 Eed:251112</div>
<div class="t" style="left:609.5px;top:1268.9px;font-size:22px;line-height:22px;color:#212529;font-weight:400;letter-spacing:0px;">Ind ID:6868479 Ind Name:Toplead Trn:</div>
<div class="t" style="left:609.5px;top:1302.2px;font-size:22px;line-height:22px;color:#212529;font-weight:400;letter-spacing:0px;">3168263020Tc</div>
<div class="t" style="left:1051.5px;top:1219.0px;font-size:22px;line-height:22px;color:#212529;font-weight:400;letter-spacing:0px;">-112.00</div>
<div class="t" style="left:1184.5px;top:1219.0px;font-size:22px;line-height:22px;color:#212529;font-weight:400;letter-spacing:0px;">Other Expenses</div>
<div class="t" style="left:1466.5px;top:1202.3px;font-size:22px;line-height:22px;color:#212529;font-weight:400;letter-spacing:0px;">Miscellaneous</div>
<div class="t" style="left:1466.5px;top:1235.6px;font-size:22px;line-height:22px;color:#212529;font-weight:400;letter-spacing:0px;">Expenses</div>
<div class="t" style="left:1659.5px;top:1219.0px;font-size:22px;line-height:22px;color:#007bff;font-weight:400;letter-spacing:0px;">9107</div>
<div class="t" style="left:1837.8px;top:1219.0px;font-size:22px;line-height:22px;color:#212529;font-weight:400;letter-spacing:0px;">completed</div>
<div class="t" style="left:2003.2px;top:1202.3px;font-size:22px;line-height:22px;color:#212529;font-weight:400;letter-spacing:0px;">03/02/2026,</div>
<div class="t" style="left:2003.2px;top:1235.6px;font-size:22px;line-height:22px;color:#212529;font-weight:400;letter-spacing:0px;">15:47:52</div>
<div class="b" style="left:2182.0px;top:1207.6px;width:109.8px;height:43.8px;background:#007bff;border-radius:8px"></div>
<div class="t" style="left:2182.0px;width:109.8px;text-align:center;top:1220.5px;font-size:18.75px;line-height:18.75px;color:#fff">Edit</div>
<div class="b" style="left:2303.0px;top:1207.6px;width:109.9px;height:43.8px;background:#dc3545;border-radius:8px"></div>
<div class="t" style="left:2303.0px;width:109.9px;text-align:center;top:1220.5px;font-size:18.75px;line-height:18.75px;color:#fff">Delete</div>
<div class="b" style="left:2424.0px;top:1207.6px;width:109.8px;height:43.8px;background:#ffc107;border-radius:8px"></div>
<div class="t" style="left:2424.0px;width:109.8px;text-align:center;top:1220.5px;font-size:18.75px;line-height:18.75px;color:#fff">Workflow</div>
</div>
<div class="b" style="left:423.0px;top:609.5px;width:2137.0px;height:4.0px;background:linear-gradient(rgba(0,0,0,0.045),rgba(0,0,0,0))"></div>
<div class="b" style="left:2560.0px;top:415.5px;width:19.0px;height:817.5px;background:#fafafa"></div>
<svg style="position:absolute;left:0;top:0;overflow:visible" width="1" height="1"><polygon points="2569.3,422.4 2574.5,429.59999999999997 2564.1000000000004,429.59999999999997" fill="#8b8b8b" stroke="#8b8b8b" stroke-width="2" stroke-linejoin="round"/></svg>
<div class="b" style="left:2564.0px;top:437.7px;width:10.6px;height:68.3px;background:#8b8b8b;border-radius:6px"></div>
<svg style="position:absolute;left:0;top:0;overflow:visible" width="1" height="1"><polygon points="2564.8,1219.6999999999998 2575.2,1219.6999999999998 2570,1226.8999999999999" fill="#8b8b8b" stroke="#8b8b8b" stroke-width="2" stroke-linejoin="round"/></svg>
<div class="b" style="left:1297.4px;top:1261.0px;width:72.2px;height:39.0px;background:#fff;border:1px solid #dee2e6;border-radius:7px"></div>
<div class="b" style="left:1377.0px;top:1261.0px;width:47.8px;height:39.0px;background:#007bff;border-radius:7px"></div>
<div class="b" style="left:1432.2px;top:1261.0px;width:47.3px;height:39.0px;background:#fff;border:1px solid #dee2e6;border-radius:7px"></div>
<div class="b" style="left:1487.2px;top:1261.0px;width:47.5px;height:39.0px;background:#fff;border:1px solid #dee2e6;border-radius:7px"></div>
<div class="b" style="left:1568.0px;top:1261.0px;width:54.3px;height:39.0px;background:#fff;border:1px solid #dee2e6;border-radius:7px"></div>
<div class="b" style="left:1630.2px;top:1261.0px;width:72.2px;height:39.0px;background:#fff;border:1px solid #dee2e6;border-radius:7px"></div></body></html>
